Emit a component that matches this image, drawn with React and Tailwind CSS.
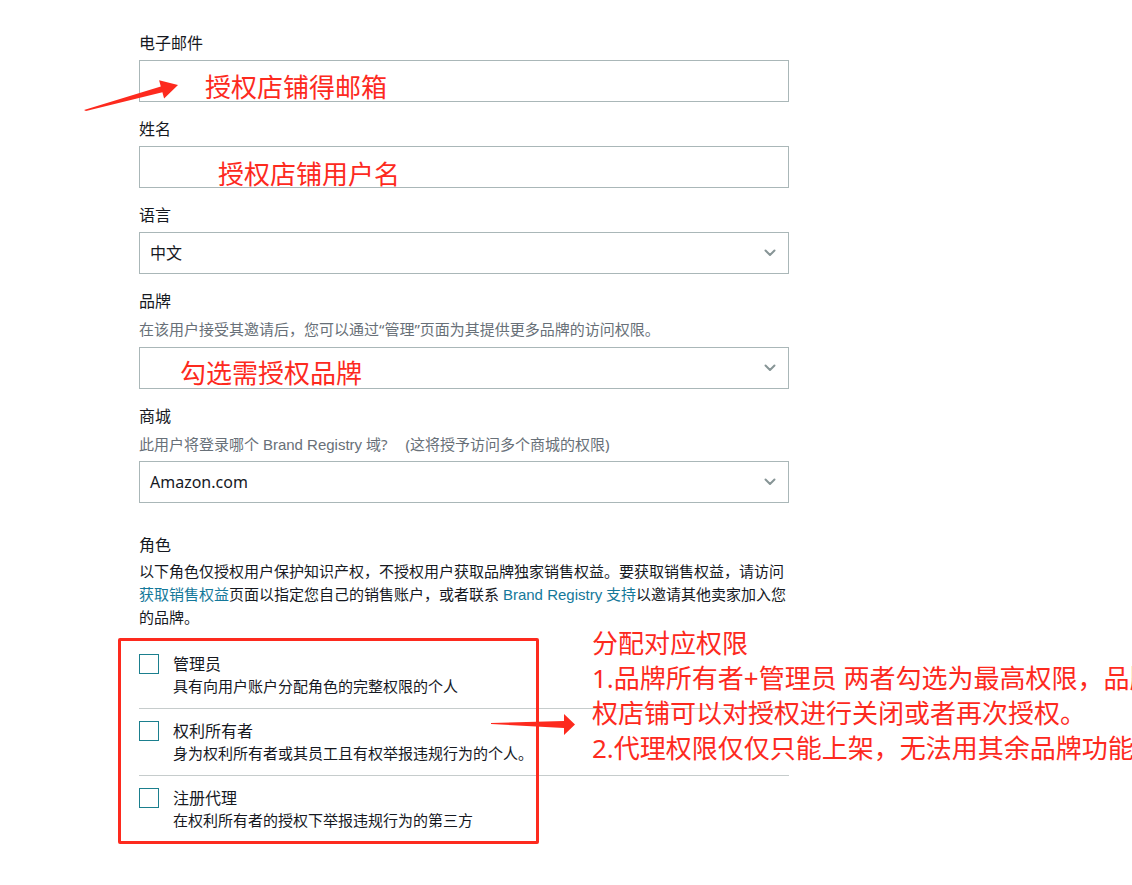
import React from 'react';

const font = "font-['Noto_Sans','Noto_Sans_CJK_SC',sans-serif]";
const latin = "font-['Liberation_Sans','Noto_Sans',sans-serif]";

const Chevron = () => (
  <svg width="12" height="8" viewBox="0 0 12 8" fill="none">
    <path d="M1.5 1.5l4.5 4.5 4.5-4.5" stroke="#879596" strokeWidth="2" strokeLinecap="round" strokeLinejoin="round" />
  </svg>
);

const Label = ({ children }) => (
  <div className="text-[16px] leading-[22px] text-[#16191f]">{children}</div>
);

const Helper = ({ children }) => (
  <div className="mt-[6px] h-[22px] text-[15px] leading-[22px] text-[#687078]">{children}</div>
);

const TextInput = () => (
  <div className="mt-[6px] h-[42px] w-full border border-[#aab7b8] bg-white" />
);

const Select = ({ value, gap = 'mt-[6px]' }) => (
  <div className={`${gap} flex h-[42px] w-full items-center justify-between border border-[#aab7b8] bg-white pl-[10px] pr-[12px]`}>
    <span className="text-[16px] text-[#16191f]">{value}</span>
    <Chevron />
  </div>
);

const RoleRow = ({ title, desc, last }) => (
  <div className={`flex gap-[14px] py-[11px] ${last ? '' : 'border-b border-[#c6cccc]'}`}>
    <div className="mt-[1px] h-[20px] w-[20px] shrink-0 border border-[#1b7f8e] bg-white" />
    <div>
      <div className="text-[16px] leading-[22px] text-[#16191f]">{title}</div>
      <div className="text-[15px] leading-[22px] text-[#16191f]">{desc}</div>
    </div>
  </div>
);

export default function App() {
  return (
    <div className={`relative min-h-screen w-full overflow-hidden bg-white ${font}`}>
      <div className="ml-[139px] w-[650px] pt-[32px] pb-[40px]">
        {/* email */}
        <Label>电子邮件</Label>
        <TextInput />

        <div className="mt-[16px]">
          <Label>姓名</Label>
          <TextInput />
        </div>

        <div className="mt-[16px]">
          <Label>语言</Label>
          <Select value="中文" />
        </div>

        <div className="mt-[16px]">
          <Label>品牌</Label>
          <Helper>在该用户接受其邀请后，您可以通过“管理”页面为其提供更多品牌的访问权限。</Helper>
          <Select value="" gap="mt-[7px]" />
        </div>

        <div className="mt-[16px]">
          <Label>商城</Label>
          <Helper>
            此用户将登录哪个 <span className={latin}>Brand Registry</span> 域?<span className="ml-[18px]">(这将授予访问多个商城的权限)</span>
          </Helper>
          <Select value="Amazon.com" gap="mt-[6px]" />
        </div>

        {/* roles */}
        <div className="mt-[31px]">
          <Label>角色</Label>
          <p className="mt-[4px] text-[15px] leading-[23px] text-[#16191f]">
            以下角色仅授权用户保护知识产权，不授权用户获取品牌独家销售权益。要获取销售权益，请访问
            <span className="text-[#14789a]">获取销售权益</span>页面以指定您自己的销售账户，或者联系{' '}
            <span className="text-[#14789a]"><span className={latin}>Brand Registry</span> 支持</span>以邀请其他卖家加入您的品牌。
          </p>
          <div className="mt-[13px]">
            <RoleRow title="管理员" desc="具有向用户账户分配角色的完整权限的个人" />
            <RoleRow title="权利所有者" desc="身为权利所有者或其员工且有权举报违规行为的个人。" />
            <RoleRow title="注册代理" desc="在权利所有者的授权下举报违规行为的第三方" last />
          </div>
        </div>
      </div>

      {/* annotations */}
      <div className="absolute left-[205px] top-[74px] text-[26px] leading-none text-[#fd2a1e]">授权店铺得邮箱</div>
      <div className="absolute left-[218px] top-[161px] text-[26px] leading-none text-[#fd2a1e]">授权店铺用户名</div>
      <div className="absolute left-[180px] top-[360px] text-[26px] leading-none text-[#fd2a1e]">勾选需授权品牌</div>

      <div className="absolute left-[118px] top-[638px] h-[206px] w-[421px] rounded-[2px] border-[3px] border-[#fd2a1e]" />

      <div className="absolute left-[592px] top-[626px] whitespace-nowrap text-[26px] leading-[35px] text-[#fd2a1e]">
        <div>分配对应权限</div>
        <div>1.品牌所有者+管理员 两者勾选为最高权限，品牌授</div>
        <div>权店铺可以对授权进行关闭或者再次授权。</div>
        <div>2.代理权限仅仅只能上架，无法用其余品牌功能</div>
      </div>

      <svg className="absolute left-[80px] top-[70px]" width="105" height="45" viewBox="0 0 105 45">
        <polygon points="4,40 6,41 82.4,22.3 84.1,28.6 98,15 79.1,10.2 80.8,16.5" fill="#fd2a1e" />
      </svg>
      <svg className="absolute left-[485px] top-[710px]" width="95" height="30" viewBox="0 0 95 30">
        <polygon points="6,13 6,14 79,18 79,25 90,14.5 79,4 79,11" fill="#fd2a1e" />
      </svg>
    </div>
  );
}
